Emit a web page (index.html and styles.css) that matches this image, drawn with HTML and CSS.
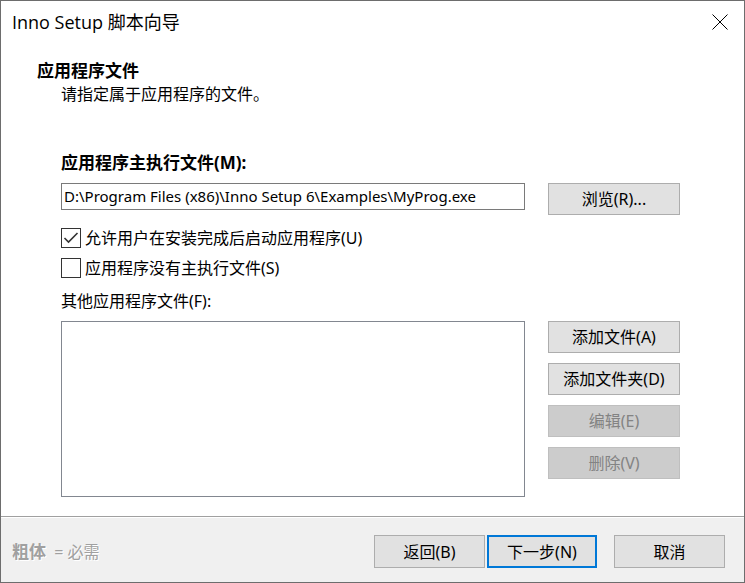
FILE: index.html
```html
<!DOCTYPE html>
<html lang="zh-CN">
<head>
<meta charset="utf-8">
<meta name="viewport" content="width=device-width, initial-scale=1">
<title>Inno Setup 脚本向导</title>
<link rel="stylesheet" href="styles.css">
</head>
<body>
<form class="wizard">
  <header class="titlebar">
    <h1 class="title">Inno Setup 脚本向导</h1>
    <button class="close" type="button" aria-label="关闭">
      <svg width="16" height="16" viewBox="0 0 16 16" aria-hidden="true"><path d="M.5 .5l15 15M15.5 .5l-15 15"/></svg>
    </button>
  </header>

  <div class="intro">
    <h2 class="heading">应用程序文件</h2>
    <p class="description">请指定属于应用程序的文件。</p>
  </div>

  <main class="page">
    <label class="label required" for="main-exe">应用程序主执行文件(M):</label>
    <div class="row">
      <input class="field" id="main-exe" type="text" value="D:\Program Files (x86)\Inno Setup 6\Examples\MyProg.exe">
      <button class="button" type="button">浏览(R)...</button>
    </div>
    <div class="options">
      <label class="option"><input type="checkbox" checked>允许用户在安装完成后启动应用程序(U)</label>
      <label class="option"><input type="checkbox">应用程序没有主执行文件(S)</label>
    </div>
    <label class="label" for="other-files">其他应用程序文件(F):</label>
    <div class="row files">
      <select class="list" id="other-files" size="4"></select>
      <div class="actions">
        <button class="button" type="button">添加文件(A)</button>
        <button class="button" type="button">添加文件夹(D)</button>
        <button class="button" type="button" disabled>编辑(E)</button>
        <button class="button" type="button" disabled>删除(V)</button>
      </div>
    </div>
  </main>

  <footer class="footer">
    <p class="hint"><b>粗体</b> = 必需</p>
    <button class="button" type="button">返回(B)</button>
    <button class="button primary" type="button">下一步(N)</button>
    <button class="button cancel" type="button">取消</button>
  </footer>
</form>
</body>
</html>
```
FILE: styles.css
```css
* {
  box-sizing: border-box;
}

body {
  margin: 0;
  font: 16px/20px "Noto Sans", "Noto Sans CJK SC", sans-serif;
  color: #000;
  background: #fff;
}

h1, h2, p {
  margin: 0;
}

button, input, select {
  font: inherit;
  color: inherit;
  border-radius: 0;
}

.wizard {
  display: flex;
  flex-direction: column;
  min-height: 100vh;
  border: 1px solid #6d6d6d;
}

.titlebar {
  display: flex;
  align-items: center;
  justify-content: space-between;
  height: 42px;
  padding: 0 16px 0 11px;
}

.title {
  font: 18px/24px "Open Sans", "Noto Sans CJK SC", sans-serif;
}

.close {
  display: flex;
  padding: 0;
  border: 0;
  background: none;
}

.close svg {
  fill: none;
  stroke: #000;
}

.intro {
  padding: 18px 36px 0;
}

.heading {
  font-size: 17px;
  line-height: 20px;
}

.description {
  padding: 3px 24px 0;
}

.page {
  display: flex;
  flex: 1;
  flex-direction: column;
  padding: 49px 64px 19px 60px;
}

.label {
  margin-bottom: 10px;
}

.required {
  font-size: 17px;
  font-weight: bold;
}

.row {
  display: flex;
  align-items: flex-start;
  gap: 23px;
}

.field {
  flex: 1;
  min-width: 0;
  height: 27px;
  padding: 0 2px 2px;
  border: 1px solid #7a7a7a;
  background: #fff;
  font-size: 15px;
}

.button {
  width: 132px;
  height: 32px;
  padding: 0;
  border: 1px solid #adadad;
  background: #e1e1e1;
}

.button:disabled {
  border-color: #bfbfbf;
  background: #ccc;
  color: #838383;
}

.options {
  display: grid;
  gap: 10px;
  margin: 13px 0;
}

.option {
  display: flex;
  align-items: center;
  gap: 4px;
}

.option input {
  appearance: none;
  width: 20px;
  height: 20px;
  margin: 0;
  border: 1px solid #333;
  background: #fff;
}

.option input:checked {
  background: url("data:image/svg+xml,%3Csvg xmlns='http://www.w3.org/2000/svg' viewBox='0 0 18 18'%3E%3Cpath d='M2.5 9l4 4 9-9' fill='none' stroke='%23333' stroke-width='1.6'/%3E%3C/svg%3E") center / 18px no-repeat;
}

.files {
  flex: 1;
  align-items: stretch;
}

.list {
  flex: 1;
  min-width: 0;
  border: 1px solid #828790;
  background: #fff;
}

.actions {
  display: flex;
  flex-direction: column;
  gap: 10px;
}

.footer {
  display: flex;
  align-items: center;
  padding: 18px 19px 14px 11px;
  border-top: 1px solid #a0a0a0;
  box-shadow: inset 0 1px #fff;
  background: #f0f0f0;
}

.hint {
  margin-right: auto;
  color: #a0a0a0;
  text-shadow: 1px 1px #fff;
}

.hint b {
  margin-right: 4px;
  font-size: 17px;
}

.footer .button {
  width: 111px;
  height: 33px;
}

.footer .primary {
  width: 110px;
  margin-left: 2px;
  border: 2px solid #0078d7;
}

.footer .cancel {
  margin-left: 17px;
}
```
